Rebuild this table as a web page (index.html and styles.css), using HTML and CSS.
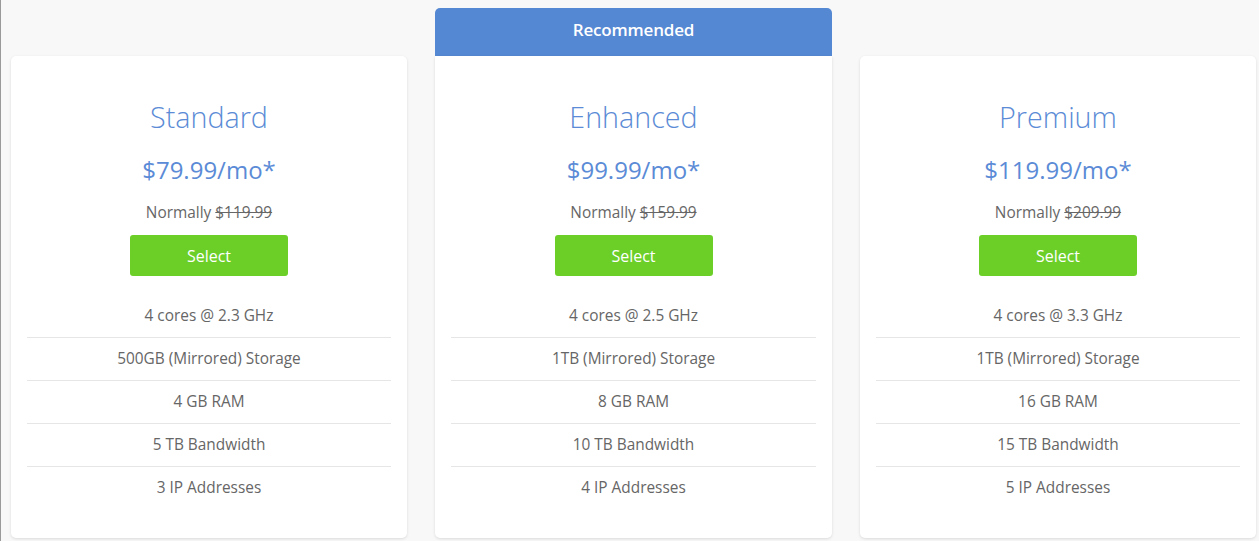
FILE: index.html
```html
<!DOCTYPE html>
<html>
<head>
<meta charset="utf-8">
<link rel="stylesheet" href="styles.css">
</head>
<body>
<div class="plans">
  <div class="plan">
    <div class="plan-spacer"></div>
    <div class="card">
      <h2 class="name">Standard</h2>
      <div class="price">$79.99/mo*</div>
      <div class="normal">Normally <s>$119.99</s></div>
      <button class="select">Select</button>
      <ul class="features">
        <li>4 cores @ 2.3 GHz</li>
        <li>500GB (Mirrored) Storage</li>
        <li>4 GB RAM</li>
        <li>5 TB Bandwidth</li>
        <li>3 IP Addresses</li>
      </ul>
    </div>
  </div>
  <div class="plan">
    <div class="ribbon">Recommended</div>
    <div class="card card-rec">
      <h2 class="name">Enhanced</h2>
      <div class="price">$99.99/mo*</div>
      <div class="normal">Normally <s>$159.99</s></div>
      <button class="select">Select</button>
      <ul class="features">
        <li>4 cores @ 2.5 GHz</li>
        <li>1TB (Mirrored) Storage</li>
        <li>8 GB RAM</li>
        <li>10 TB Bandwidth</li>
        <li>4 IP Addresses</li>
      </ul>
    </div>
  </div>
  <div class="plan">
    <div class="plan-spacer"></div>
    <div class="card">
      <h2 class="name">Premium</h2>
      <div class="price">$119.99/mo*</div>
      <div class="normal">Normally <s>$209.99</s></div>
      <button class="select">Select</button>
      <ul class="features">
        <li>4 cores @ 3.3 GHz</li>
        <li>1TB (Mirrored) Storage</li>
        <li>16 GB RAM</li>
        <li>15 TB Bandwidth</li>
        <li>5 IP Addresses</li>
      </ul>
    </div>
  </div>
</div>
</body>
</html>
```
FILE: styles.css
```css
html, body {
  margin: 0;
  padding: 0;
}
body {
  background: #f8f8f8;
  border-left: 1px solid #9a9a9a;
  min-height: 541px;
  box-sizing: border-box;
  font-family: "Open Sans", "Liberation Sans", sans-serif;
  color: #666;
}
.plans {
  display: grid;
  grid-template-columns: 396px 397px 396px;
  column-gap: 28px;
  padding: 8px 0 0 10px;
}
.plan {
  display: flex;
  flex-direction: column;
}
.plan-spacer {
  height: 48px;
}
.ribbon {
  height: 48px;
  box-sizing: border-box;
  padding-bottom: 5px;
  background: #5588d3;
  color: #fff;
  border-radius: 5px 5px 0 0;
  font-size: 17px;
  font-weight: 600;
  display: flex;
  align-items: center;
  justify-content: center;
  letter-spacing: -0.2px;
}
.card {
  background: #fff;
  border-radius: 5px;
  box-shadow: 0 1px 3px rgba(0,0,0,0.12);
  padding: 41px 16px 29px;
  height: 482px;
  box-sizing: border-box;
  display: flex;
  flex-direction: column;
  align-items: center;
}
.card-rec {
  border-radius: 0 0 5px 5px;
}
.name {
  margin: 0;
  font-size: 28.7px;
  font-weight: 300;
  color: #5b8bd6;
  line-height: 40px;
}
.price {
  margin-top: 17px;
  font-size: 24px;
  font-weight: 400;
  color: #5b8bd6;
  line-height: 32px;
}
.normal {
  margin-top: 16px;
  font-size: 15.4px;
  line-height: 22px;
  color: #666;
}
.normal s {
  color: #666;
}
.select {
  margin-top: 11px;
  width: 158px;
  height: 44px;
  border: none;
  border-radius: 3px;
  background: #6bcf28;
  color: #fff;
  font-family: "Open Sans", "Liberation Sans", sans-serif;
  font-size: 16px;
  font-weight: 500;
  cursor: pointer;
}
.features {
  list-style: none;
  margin: 19px 0 0;
  padding: 0;
  width: 100%;
}
.features li {
  text-align: center;
  font-size: 15.4px;
  line-height: 20px;
  padding: 11px 0 11px;
  border-bottom: 1px solid #e6e6e6;
  color: #666;
}
.features li:last-child {
  border-bottom: none;
}
```
